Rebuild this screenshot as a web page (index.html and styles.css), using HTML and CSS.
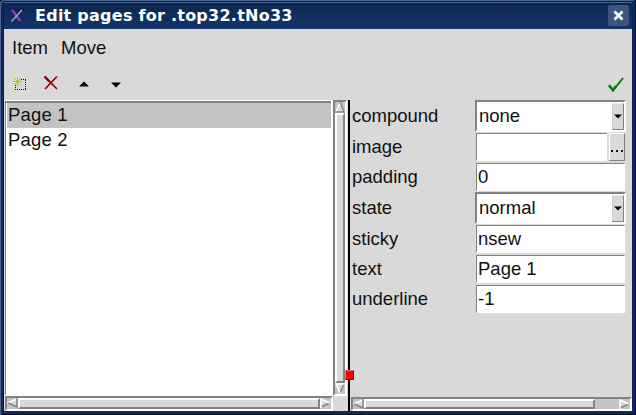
FILE: index.html
```html
<!DOCTYPE html>
<html lang="en">
<head>
<meta charset="utf-8">
<title>Edit pages</title>
<link rel="stylesheet" href="styles.css">
</head>
<body>
<div class="window">
  <header class="titlebar">
    <svg class="logo" width="14" height="14" viewBox="0 0 14 14"><path d="M1 1h2.500l8 11H9z" fill="#b43bd0"/><path d="M12 1L1.500 12.500" stroke="#b9a3dc" stroke-width="1.300"/></svg>
    <h1>Edit pages for .top32.tNo33</h1>
    <button class="close" aria-label="Close"><svg width="11" height="11" viewBox="0 0 11 11"><path d="M1.500 1.500l8 8M9.500 1.500l-8 8" stroke="#fff" stroke-width="2.600"/></svg></button>
  </header>
  <div class="client">
    <nav class="menu"><span>Item</span><span>Move</span></nav>
    <div class="toolbar">
      <svg class="new" width="16" height="16" viewBox="0 0 16 16" shape-rendering="crispEdges"><path d="M2 7v7M2 13.500h11M12.500 4v10M8 3.500h5" fill="none" stroke="#111" stroke-dasharray="1 1"/><path d="M4 1h1v3h1V3h1V2h1v1H7v1H6v1h3v1H6v1h1v1h1v1H7V8H6V7H5v3H4V7H3v1H2v1H1V8h1V7h1V6H0V5h3V4H2V3H1V2h1v1h1v1h1z" fill="#b9c43c"/></svg>
      <svg class="delete" width="16" height="16" viewBox="0 0 16 16"><path d="M2 2l12 12M14 1.500L2 14" stroke="#900000" stroke-width="1.700"/><path d="M1.500 1.500l5 5" stroke="#900000" stroke-width="2.400"/></svg>
      <svg class="up" width="10" height="6" viewBox="0 0 10 6"><path d="M0 5.500L5 .5l5 5z"/></svg>
      <svg class="down" width="10" height="6" viewBox="0 0 10 6"><path d="M0 .5h10l-5 5z"/></svg>
      <svg class="check" width="16" height="17" viewBox="0 0 16 17"><path d="M1 9l4 5.500L15 2" fill="none" stroke="#078007" stroke-width="2"/><path d="M1 9.500l4 4.500 3-4" fill="none" stroke="#078007" stroke-width="2.500"/></svg>
    </div>
    <main class="panes">
      <section class="left">
        <div class="list"><div class="item selected">Page 1</div><div class="item">Page 2</div></div>
        <div class="scroll vertical">
          <svg class="arrow" width="10" height="11" viewBox="0 0 10 11"><path d="M5 0L0 11h10z" fill="#d9d9d9"/><path d="M5 1L1 10" stroke="#fff" stroke-width="1.500"/><path d="M5 0l4 10H0" fill="none" stroke="#828282" stroke-width="1.500"/></svg>
          <div class="thumb"></div>
          <svg class="arrow" width="10" height="11" viewBox="0 0 10 11"><path d="M0 0h10L5 11z" fill="#d9d9d9"/><path d="M9 1L5 10" stroke="#828282" stroke-width="1.500"/><path d="M10 1H1l4 9" fill="none" stroke="#fff" stroke-width="1.500"/></svg>
        </div>
        <div class="scroll horizontal">
          <svg class="arrow" width="11" height="10" viewBox="0 0 11 10"><path d="M0 5L11 0v10z" fill="#d9d9d9"/><path d="M0 5l10-4" stroke="#fff" stroke-width="1.500"/><path d="M10 0v9L1 5" fill="none" stroke="#828282" stroke-width="1.500"/></svg>
          <div class="thumb"></div>
          <svg class="arrow" width="11" height="10" viewBox="0 0 11 10"><path d="M0 0l11 5L0 10z" fill="#d9d9d9"/><path d="M1 9l9-4" stroke="#828282" stroke-width="1.500"/><path d="M1 10V1l9 4" fill="none" stroke="#fff" stroke-width="1.500"/></svg>
        </div>
      </section>
      <div class="sash"><i class="handle"></i></div>
      <section class="right">
        <div class="form">
          <label>compound</label><div class="combo"><span>none</span><b><svg width="8" height="5" viewBox="0 0 8 5"><path d="M0 .5h8l-4 4z"/></svg></b></div>
          <label>image</label><div class="picker"><div class="entry"></div><button class="browse" aria-label="Browse"><i></i><i></i><i></i></button></div>
          <label>padding</label><div class="entry">0</div>
          <label>state</label><div class="combo"><span>normal</span><b><svg width="8" height="5" viewBox="0 0 8 5"><path d="M0 .5h8l-4 4z"/></svg></b></div>
          <label>sticky</label><div class="entry">nsew</div>
          <label>text</label><div class="entry">Page 1</div>
          <label>underline</label><div class="entry">-1</div>
        </div>
        <div class="scroll horizontal">
          <svg class="arrow" width="11" height="10" viewBox="0 0 11 10"><path d="M0 5L11 0v10z" fill="#d9d9d9"/><path d="M0 5l10-4" stroke="#fff" stroke-width="1.500"/><path d="M10 0v9L1 5" fill="none" stroke="#828282" stroke-width="1.500"/></svg>
          <div class="thumb partial"></div>
          <svg class="arrow end" width="11" height="10" viewBox="0 0 11 10"><path d="M0 0l11 5L0 10z" fill="#d9d9d9"/><path d="M1 9l9-4" stroke="#828282" stroke-width="1.500"/><path d="M1 10V1l9 4" fill="none" stroke="#fff" stroke-width="1.500"/></svg>
        </div>
      </section>
    </main>
  </div>
</div>
</body>
</html>
```
FILE: styles.css
```css
* { box-sizing: border-box; }
body { margin: 0; background: #000; }
svg { display: block; flex: none; }
.window {
  width: 636px; height: 415px; padding: 1px 4px 4px;
  display: flex; flex-direction: column;
  background: #10295a; border-radius: 4px 4px 0 0;
  box-shadow: inset 1px 1px #4a6590, inset -1px -1px #03102c, inset 3px 0 #10295a, inset 4px 0 #071b40;
  font: 18.5px/24px "Liberation Sans", sans-serif; color: #111;
}
.titlebar {
  height: 28px; flex: none; display: flex; align-items: center;
  padding: 1px 3px 0 6px;
  background: linear-gradient(#071b40 0 1px, #4a6590 1px 2px, transparent 2px), linear-gradient(#0c244d, #14356b);
}
.logo { margin-top: 1px; }
h1 {
  margin: 1px auto 0 11px; color: #fff; white-space: nowrap;
  font: bold 16px/20px "DejaVu Sans", sans-serif; letter-spacing: .25px;
}
.close {
  width: 21px; height: 21px; padding: 0; border: 0; border-radius: 2px;
  background: #3b5480; display: grid; place-items: center;
}
.client { flex: 1; min-height: 0; background: #d9d9d9; display: flex; flex-direction: column; }
.menu { height: 38px; display: flex; gap: 13px; align-items: center; padding-left: 8px; }
.toolbar { height: 33px; display: flex; align-items: center; padding: 0 8px 0 9px; }
.delete { margin-left: 14px; margin-top: -2px; }
.up { margin-left: 20px; }
.down { margin-left: 22px; margin-top: 2px; }
.check { margin-left: auto; margin-top: 2px; }
.panes { height: 311px; display: flex; }
.left {
  width: 344px; padding-left: 1px; display: grid;
  grid-template: 296px 15px / 328px 14px;
}
.list {
  background: #fff; border: solid #fff; border-width: 1px 2px 1px 0;
  padding: 2px 0 0 2px;
  box-shadow: inset 1px 2px #828282;
}
.item { height: 25px; line-height: 24px; padding-left: 1px; letter-spacing: .2px; }
.item.selected { background: #c3c3c3; }
.scroll {
  display: flex; background: #c3c3c3; border: 2px solid;
  border-color: #828282 #fff #fff #828282;
}
.vertical { flex-direction: column; }
.thumb { flex: 1; background: #d9d9d9; border: 2px solid; border-color: #fff #828282 #828282 #fff; }
.partial { flex: 0 0 231px; }
.end { margin-left: auto; }
.sash { width: 2px; background: #000; position: relative; }
.handle {
  position: absolute; left: -3px; top: 270px; width: 9px; height: 10px;
  background: #f00; border: 1px solid; border-color: #ff6868 #8e0000 #8e0000 #ff6868;
}
.right { flex: 1; display: flex; flex-direction: column; justify-content: space-between; padding-left: 1px; }
.right .scroll { height: 14px; }
.form {
  display: grid; grid-template-columns: 124px 151px;
  grid-template-rows: 32px 30px 30px 32px 30px 30px 30px; align-items: center;
}
.form label { padding-left: 1px; }
.entry {
  height: 28px; margin: 0 1px; padding-left: 1px; background: #fff;
  border: 1px solid; border-color: #828282 #fff #fff #828282; line-height: 26px;
}
.combo {
  height: 32px; display: flex; align-items: center; background: #fff;
  border: 2px solid; border-color: #828282 #fff #fff #828282; padding: 1px 0;
}
.combo span { flex: 1; padding-left: 2px; }
.combo b {
  width: 12px; height: 27px; background: #d9d9d9; display: grid; place-items: center;
  border: 1px solid; border-color: #eee #828282 #828282 #d0d0d0;
}
.picker { display: flex; align-items: center; }
.picker .entry { width: 131px; margin-right: 2px; }
.browse {
  width: 16px; height: 28px; padding: 0 1px 8px; background: #d9d9d9;
  border: 1px solid; border-color: #fff #828282 #828282 #fff;
  display: flex; align-items: flex-end; justify-content: space-between;
}
.browse i { width: 2px; height: 2px; background: #111; }
```
